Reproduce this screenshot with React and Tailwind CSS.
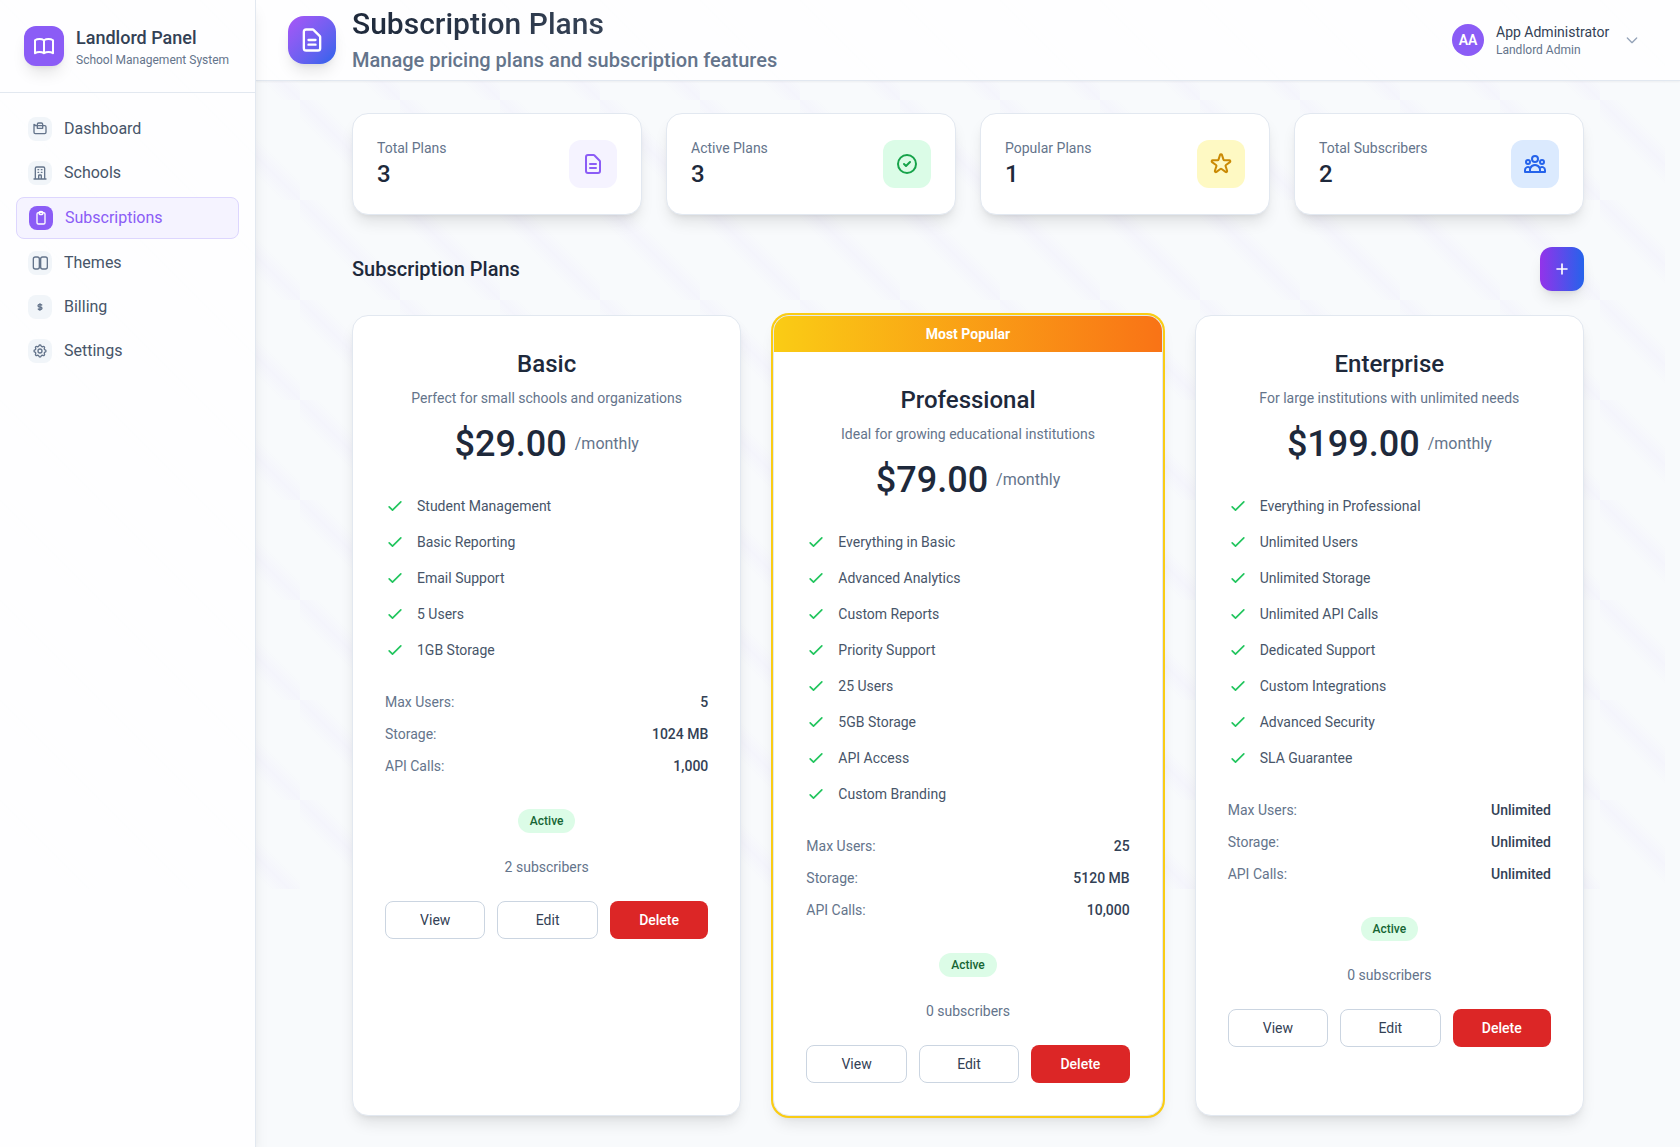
const NAV = [
  {
    label: 'Dashboard',
    icon: (
      <>
        <path d="M3 7v10a2 2 0 002 2h14a2 2 0 002-2V9a2 2 0 00-2-2H5a2 2 0 00-2-2z" />
        <path d="M8 5a2 2 0 012-2h4a2 2 0 012 2v6H8V5z" />
      </>
    ),
  },
  {
    label: 'Schools',
    icon: (
      <path d="M19 21V5a2 2 0 00-2-2H7a2 2 0 00-2 2v16m14 0h2m-2 0h-5m-9 0H3m2 0h5M9 7h1m-1 4h1m4-4h1m-1 4h1m-5 10v-5a1 1 0 011-1h2a1 1 0 011 1v5m-4 0h4" />
    ),
  },
  {
    label: 'Subscriptions',
    active: true,
    icon: (
      <>
        <rect x="6" y="4" width="12" height="17" rx="2" />
        <path d="M9 4a3 2 0 016 0a3 3 0 01-6 0z" />
      </>
    ),
  },
  {
    label: 'Themes',
    icon: (
      <>
        <rect x="2" y="3" width="9" height="18" rx="3" />
        <rect x="13" y="3" width="10" height="18" rx="3" />
        <path d="M12 5v14" />
      </>
    ),
  },
  {
    label: 'Billing',
    icon: (
      <path d="M12 8c-1.657 0-3 .895-3 2s1.343 2 3 2 3 .895 3 2-1.343 2-3 2m0-8c1.11 0 2.08.402 2.599 1M12 8V7m0 1v8m0 0v1m0-1c-1.11 0-2.08-.402-2.599-1" />
    ),
  },
  {
    label: 'Settings',
    icon: (
      <>
        <path d="M10.325 4.317c.426-1.756 2.924-1.756 3.35 0a1.724 1.724 0 002.573 1.066c1.543-.94 3.31.826 2.37 2.37a1.724 1.724 0 001.065 2.572c1.756.426 1.756 2.924 0 3.35a1.724 1.724 0 00-1.066 2.573c.94 1.543-.826 3.31-2.37 2.37a1.724 1.724 0 00-2.572 1.065c-.426 1.756-2.924 1.756-3.35 0a1.724 1.724 0 00-2.573-1.066c-1.543.94-3.31-.826-2.37-2.37a1.724 1.724 0 00-1.065-2.572c-1.756-.426-1.756-2.924 0-3.35a1.724 1.724 0 001.066-2.573c-.94-1.543.826-3.31 2.37-2.37.996.608 2.296.07 2.572-1.065z" />
        <path d="M15 12a3 3 0 11-6 0 3 3 0 016 0z" />
      </>
    ),
  },
];

const DOCUMENT = (
  <path d="M9 12h6m-6 4h6m2 5H7a2 2 0 01-2-2V5a2 2 0 012-2h5.586a1 1 0 01.707.293l5.414 5.414a1 1 0 01.293.707V19a2 2 0 01-2 2z" />
);

const STATS = [
  { label: 'Total Plans', value: '3', tint: 'bg-violet-50 text-[#8b5cf6]', icon: DOCUMENT },
  {
    label: 'Active Plans',
    value: '3',
    tint: 'bg-green-100 text-[#16a34a]',
    icon: <path d="M9 12l2 2 4-4m6 2a9 9 0 11-18 0 9 9 0 0118 0z" />,
  },
  {
    label: 'Popular Plans',
    value: '1',
    tint: 'bg-[#fef9c3] text-[#ca8a04]',
    icon: (
      <path d="M11.049 2.927c.3-.921 1.603-.921 1.902 0l1.519 4.674a1 1 0 00.95.69h4.915c.969 0 1.371 1.24.588 1.81l-3.976 2.888a1 1 0 00-.363 1.118l1.518 4.674c.3.922-.755 1.688-1.538 1.118l-3.976-2.888a1 1 0 00-1.176 0l-3.976 2.888c-.783.57-1.838-.197-1.538-1.118l1.518-4.674a1 1 0 00-.363-1.118l-3.976-2.888c-.784-.57-.38-1.81.588-1.81h4.914a1 1 0 00.951-.69l1.519-4.674z" />
    ),
  },
  {
    label: 'Total Subscribers',
    value: '2',
    tint: 'bg-blue-100 text-[#2563eb]',
    icon: (
      <path d="M17 20h5v-2a3 3 0 00-5.356-1.857M17 20H7m10 0v-2c0-.656-.126-1.283-.356-1.857M7 20H2v-2a3 3 0 015.356-1.857M7 20v-2c0-.656.126-1.283.356-1.857m0 0a5.002 5.002 0 019.288 0M15 7a3 3 0 11-6 0 3 3 0 016 0zm6 3a2 2 0 11-4 0 2 2 0 014 0zM7 10a2 2 0 11-4 0 2 2 0 014 0z" />
    ),
  },
];

const PLANS = [
  {
    name: 'Basic',
    blurb: 'Perfect for small schools and organizations',
    price: '$29.00',
    features: ['Student Management', 'Basic Reporting', 'Email Support', '5 Users', '1GB Storage'],
    limits: ['5', '1024 MB', '1,000'],
    subscribers: 2,
  },
  {
    name: 'Professional',
    blurb: 'Ideal for growing educational institutions',
    price: '$79.00',
    popular: true,
    features: [
      'Everything in Basic',
      'Advanced Analytics',
      'Custom Reports',
      'Priority Support',
      '25 Users',
      '5GB Storage',
      'API Access',
      'Custom Branding',
    ],
    limits: ['25', '5120 MB', '10,000'],
    subscribers: 0,
  },
  {
    name: 'Enterprise',
    blurb: 'For large institutions with unlimited needs',
    price: '$199.00',
    features: [
      'Everything in Professional',
      'Unlimited Users',
      'Unlimited Storage',
      'Unlimited API Calls',
      'Dedicated Support',
      'Custom Integrations',
      'Advanced Security',
      'SLA Guarantee',
    ],
    limits: ['Unlimited', 'Unlimited', 'Unlimited'],
    subscribers: 0,
  },
];

const LIMIT_LABELS = ['Max Users:', 'Storage:', 'API Calls:'];

function Icon({ className, children }) {
  return (
    <svg
      className={className}
      viewBox="0 0 24 24"
      fill="none"
      stroke="currentColor"
      strokeWidth="2"
      strokeLinecap="round"
      strokeLinejoin="round"
      aria-hidden="true"
    >
      {children}
    </svg>
  );
}

function Sidebar() {
  return (
    <aside className="z-20 flex w-64 shrink-0 flex-col border-r border-[#e2e8f0] bg-white/85 shadow-lg">
      <div className="flex items-center gap-3 border-b border-[#e2e8f0] p-6">
        <div className="flex size-10 shrink-0 items-center justify-center rounded-xl bg-[#8b5cf6] text-white shadow-lg">
          <Icon className="size-6">
            <path d="M12 6.253v13C10.832 18.477 9.246 18 7.5 18c-1.746 0-3.332.477-4.5 1.253v-13C4.168 5.477 5.754 5 7.5 5S10.832 5.477 12 6.253m0 0C13.168 5.477 14.754 5 16.5 5c1.746 0 3.332.477 4.5 1.253v13C19.832 18.477 18.246 18 16.5 18c-1.746 0-3.332.477-4.5 1.253" />
          </Icon>
        </div>
        <div className="whitespace-nowrap">
          <div className="text-lg leading-7 font-medium text-[#334155]">Landlord Panel</div>
          <div className="text-xs leading-4 text-[#64748b]">School Management System</div>
        </div>
      </div>
      <nav className="flex flex-col gap-1 p-4">
        {NAV.map((item) => (
          <a
            key={item.label}
            href="#"
            className={
              item.active
                ? 'flex items-center gap-3 rounded-lg border border-[#ddd6fe] bg-violet-50 px-3 py-2 text-base text-[#8b5cf6]'
                : 'flex items-center gap-3 rounded-lg px-3 py-2 text-base text-[#475569]'
            }
          >
            <span
              className={
                item.active
                  ? 'flex size-6 items-center justify-center rounded-lg bg-[#8b5cf6] text-white'
                  : 'flex size-6 items-center justify-center rounded-lg bg-[#f1f5f9] text-[#64748b]'
              }
            >
              <Icon className="size-4">{item.icon}</Icon>
            </span>
            {item.label}
          </a>
        ))}
      </nav>
    </aside>
  );
}

function Header() {
  return (
    <header className="z-10 flex h-[81px] shrink-0 items-center justify-between border-b border-[#e2e8f0] bg-white/85 px-8 shadow-xs">
      <div className="flex items-center gap-4">
        <div className="flex size-12 items-center justify-center rounded-2xl bg-linear-to-br from-[#a855f7] to-[#2563eb] text-white shadow-lg">
          <Icon className="size-7">{DOCUMENT}</Icon>
        </div>
        <div>
          <h1 className="bg-linear-to-r from-[#1e293b] to-[#475569] bg-clip-text text-3xl leading-9 font-medium text-transparent">
            Subscription Plans
          </h1>
          <p className="mt-1 text-xl leading-7 font-medium text-[#64748b]">
            Manage pricing plans and subscription features
          </p>
        </div>
      </div>
      <button type="button" className="flex items-center gap-3 px-2 text-left">
        <span className="flex size-8 items-center justify-center rounded-full bg-[#8b5cf6] text-sm font-semibold text-white">
          AA
        </span>
        <span className="block min-w-[116px]">
          <span className="block text-sm leading-5 text-[#334155]">App Administrator</span>
          <span className="block text-xs leading-4 text-[#64748b]">Landlord Admin</span>
        </span>
        <Icon className="size-4 text-[#94a3b8]">
          <path d="M19 9l-7 7-7-7" />
        </Icon>
      </button>
    </header>
  );
}

function StatCard({ stat }) {
  return (
    <div className="flex items-center justify-between rounded-2xl border border-[#e2e8f0] bg-white p-6 shadow-lg">
      <div>
        <p className="text-sm leading-5 text-[#64748b]">{stat.label}</p>
        <p className="text-2xl leading-8 font-medium text-[#1e293b]">{stat.value}</p>
      </div>
      <div className={`flex size-12 items-center justify-center rounded-xl ${stat.tint}`}>
        <Icon className="size-6">{stat.icon}</Icon>
      </div>
    </div>
  );
}

function PlanCard({ plan }) {
  return (
    <article
      className={
        plan.popular
          ? 'overflow-hidden rounded-2xl border border-[#e2e8f0] bg-white shadow-lg ring-2 ring-[#facc15]'
          : 'overflow-hidden rounded-2xl border border-[#e2e8f0] bg-white shadow-lg'
      }
    >
      {plan.popular && (
        <div className="bg-linear-to-r/srgb from-[#facc15] to-[#f97316] py-2 text-center text-sm leading-5 font-bold text-white">
          Most Popular
        </div>
      )}
      <div className="p-8">
        <div className="text-center">
          <h3 className="text-2xl leading-8 font-medium text-[#1e293b]">{plan.name}</h3>
          <p className="mt-2 text-sm leading-5 text-[#64748b]">{plan.blurb}</p>
          <div className="mt-4 flex items-center justify-center gap-2">
            <span className="text-4xl leading-10 font-medium text-[#1e293b]">{plan.price}</span>
            <span className="text-base leading-6 text-[#64748b]">/monthly</span>
          </div>
        </div>
        <ul className="mt-8 flex flex-col gap-4">
          {plan.features.map((feature) => (
            <li key={feature} className="flex items-center gap-3 text-sm leading-5 text-[#475569]">
              <Icon className="size-5 text-[#22c55e]">
                <path d="M5 13l4 4L19 7" />
              </Icon>
              {feature}
            </li>
          ))}
        </ul>
        <dl className="mt-8 flex flex-col gap-3 text-sm leading-5">
          {LIMIT_LABELS.map((label, i) => (
            <div key={label} className="flex justify-between">
              <dt className="text-[#64748b]">{label}</dt>
              <dd className="font-medium text-[#334155]">{plan.limits[i]}</dd>
            </div>
          ))}
        </dl>
        <div className="mt-8 flex h-[25px] items-end justify-center">
          <span className="rounded-full bg-[#dcfce7] px-3 py-1 text-xs leading-4 font-medium text-[#166534]">
            Active
          </span>
        </div>
        <p className="mt-6 text-center text-sm leading-5 text-[#64748b]">{plan.subscribers} subscribers</p>
        <div className="mt-6 flex gap-3 text-sm leading-5">
          <button type="button" className="flex-1 rounded-lg border border-[#cbd5e1] px-4 py-2 text-[#334155]">
            View
          </button>
          <button type="button" className="flex-1 rounded-lg border border-[#cbd5e1] px-4 py-2 text-[#334155]">
            Edit
          </button>
          <button type="button" className="flex-1 rounded-lg bg-[#dc2626] px-4 py-2 font-medium text-white">
            Delete
          </button>
        </div>
      </div>
    </article>
  );
}

export default function App() {
  return (
    <div className="relative isolate flex min-h-screen bg-[#f8fafc] font-[Roboto,sans-serif] text-[#1e293b]">
      <div className="absolute top-0 left-0 -z-10 h-[889px] w-[1665px] max-w-full bg-[linear-gradient(45deg,transparent_40%,rgba(139,92,246,0.03)_50%,transparent_60%)] bg-size-[100px_100px]" />
      <Sidebar />
      <div className="flex min-w-0 flex-1 flex-col">
        <Header />
        <main className="flex-1 px-24 py-8">
          <section className="grid grid-cols-4 gap-6">
            {STATS.map((stat) => (
              <StatCard key={stat.label} stat={stat} />
            ))}
          </section>
          <div className="mt-8 flex items-center justify-between">
            <h2 className="text-xl leading-7 font-medium text-[#1e293b]">Subscription Plans</h2>
            <button
              type="button"
              aria-label="Add plan"
              className="flex size-11 items-center justify-center rounded-xl bg-linear-to-r/srgb from-[#9333ea] to-[#2563eb] text-white shadow-lg"
            >
              <Icon className="size-5">
                <path d="M12 6v12M6 12h12" />
              </Icon>
            </button>
          </div>
          <section className="mt-6 grid grid-cols-3 gap-8">
            {PLANS.map((plan) => (
              <PlanCard key={plan.name} plan={plan} />
            ))}
          </section>
        </main>
      </div>
    </div>
  );
}
